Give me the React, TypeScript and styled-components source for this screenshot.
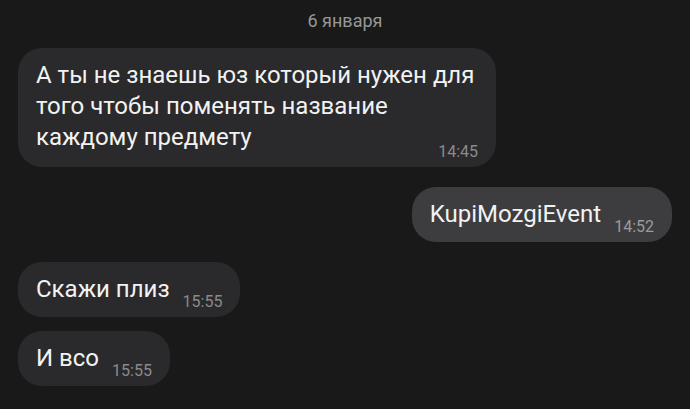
import React from "react";
import styled, { createGlobalStyle } from "styled-components";

const GlobalStyle = createGlobalStyle`
    html, body {
        margin: 0;
        padding: 0;
        background: #19191a;
    }
    body {
        font-family: Roboto, "Noto Sans", "Liberation Sans", sans-serif;
        -webkit-font-smoothing: antialiased;
    }
`;

const Page = styled.div`
    width: 690px;
    height: 409px;
    overflow: hidden;
    box-sizing: border-box;
    padding: 11px 18px 0;
    background: #19191a;
    display: flex;
    flex-direction: column;
`;

const DateLabel = styled.div`
    align-self: center;
    color: #979797;
    font-size: 18px;
    line-height: 20px;
    margin-bottom: 17px;
`;

const Feed = styled.div`
    display: flex;
    flex-direction: column;
    gap: 20px;
`;

const Group = styled.div<{ $out?: boolean }>`
    display: flex;
    flex-direction: column;
    align-items: ${(p) => (p.$out ? "flex-end" : "flex-start")};
    gap: 14px;
`;

const Bubble = styled.div<{ $out?: boolean; $stacked?: boolean }>`
    box-sizing: border-box;
    max-width: 478px;
    display: ${(p) => (p.$stacked ? "block" : "flex")};
    align-items: flex-end;
    padding: 12px 18px 7px;
    border-radius: 24px;
    background: ${(p) => (p.$out ? "#3d3d3f" : "#2a2a2c")};
`;

const Text = styled.div<{ $stacked?: boolean }>`
    display: ${(p) => (p.$stacked ? "flow-root" : "block")};
    color: #f2f2f2;
    font-size: 24px;
    line-height: 31px;
    margin-bottom: ${(p) => (p.$stacked ? "0" : "5px")};
`;

// time sits in the bottom-right corner; in a wrapped bubble it floats into the last line
const Time = styled.span<{ $out?: boolean; $stacked?: boolean }>`
    flex-shrink: 0;
    float: ${(p) => (p.$stacked ? "right" : "none")};
    color: ${(p) => (p.$out ? "#9a9a9c" : "#8a8a8c")};
    font-size: 16px;
    line-height: 16px;
    margin-left: 13px;
    margin-top: ${(p) => (p.$stacked ? "22px" : "0")};
`;

type Msg = { text: string; time: string };

const Message = ({ text, time, out, stacked }: Msg & { out?: boolean; stacked?: boolean }) =>
    stacked ? (
        <Bubble $out={out} $stacked>
            <Text $stacked>
                {text}
                <Time $out={out} $stacked>{time}</Time>
            </Text>
        </Bubble>
    ) : (
        <Bubble $out={out}>
            <Text>{text}</Text>
            <Time $out={out}>{time}</Time>
        </Bubble>
    );

const incomingLater: Msg[] = [
    { text: "Скажи плиз", time: "15:55" },
    { text: "И всо", time: "15:55" },
];

export default function App() {
    return (
        <>
            <GlobalStyle />
            <Page>
                <DateLabel>6 января</DateLabel>
                <Feed>
                    <Group>
                        <Message
                            stacked
                            text="А ты не знаешь юз который нужен для того чтобы поменять название каждому предмету"
                            time="14:45"
                        />
                    </Group>
                    <Group $out>
                        <Message out text="KupiMozgiEvent" time="14:52" />
                    </Group>
                    <Group>
                        {incomingLater.map((m, i) => (
                            <Message key={i} text={m.text} time={m.time} />
                        ))}
                    </Group>
                </Feed>
            </Page>
        </>
    );
}
